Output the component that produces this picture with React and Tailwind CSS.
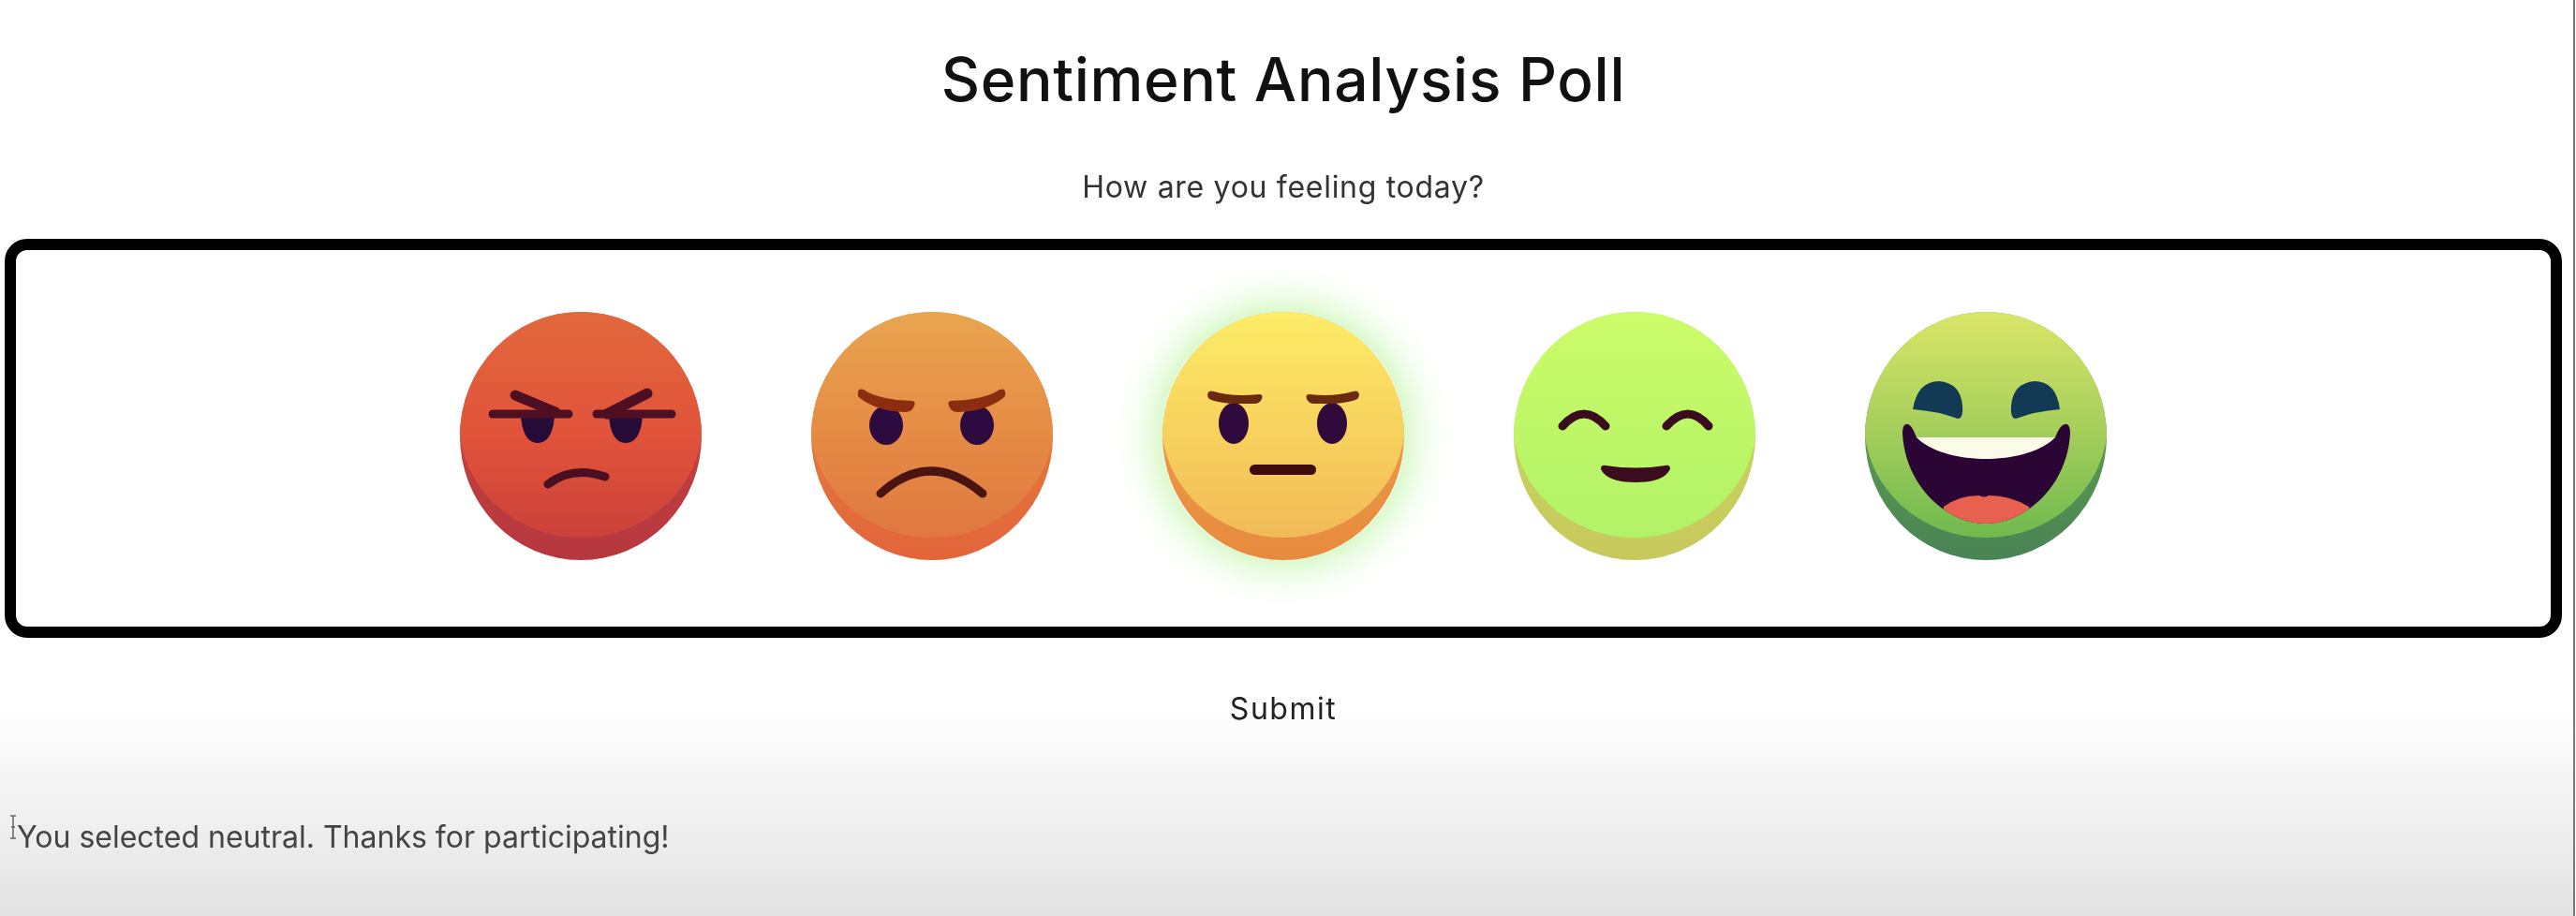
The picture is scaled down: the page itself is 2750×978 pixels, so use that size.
import React from 'react';

function FaceBase({ id, stops, rim, children }) {
  return (
    <svg viewBox="0 0 258 265" className="w-full h-full block">
      <defs>
        <linearGradient id={`${id}-rim`} x1="0" y1="0" x2="0" y2="1">
          <stop offset="0" stopColor={rim[0]} />
          <stop offset="1" stopColor={rim[1]} />
        </linearGradient>
        <linearGradient id={`${id}-face`} x1="0" y1="0" x2="0" y2="1">
          {stops.map(([o, c]) => (
            <stop key={o} offset={o} stopColor={c} />
          ))}
        </linearGradient>
        <clipPath id={`${id}-clip`}>
          <ellipse cx="129" cy="132.5" rx="129" ry="132.5" />
        </clipPath>
      </defs>
      <ellipse cx="129" cy="132.5" rx="129" ry="132.5" fill={`url(#${id}-rim)`} />
      <g clipPath={`url(#${id}-clip)`}>
        <ellipse cx="129" cy="118" rx="130" ry="123" fill={`url(#${id}-face)`} />
      </g>
      {children}
    </svg>
  );
}

function FuriousFace() {
  return (
    <FaceBase
      id="furious"
      rim={['#d2493c', '#b5373f']}
      stops={[[0, '#e2693c'], [0.55, '#e1533a'], [1, '#cb413a']]}
    >
      <g fill="#260a38">
        <path d="M65 106H101C101 126 95 140 83 140C71 140 65 126 65 106Z" />
        <path d="M159 106H195C195 126 189 140 177 140C165 140 159 126 159 106Z" />
      </g>
      <g fill="none" stroke="#4f0f22" strokeLinecap="round">
        <path d="M35 109H116" strokeWidth="9" />
        <path d="M146 109H226" strokeWidth="9" />
        <path d="M59 89L102 107" strokeWidth="11" />
        <path d="M200 87L157 109" strokeWidth="11" />
        <path d="M94 184Q120 164 155 176" strokeWidth="9" stroke="#4a0f20" />
      </g>
    </FaceBase>
  );
}

function AngryFace() {
  return (
    <FaceBase
      id="angry"
      rim={['#e58a45', '#e2653a']}
      stops={[[0, '#e9a650'], [0.55, '#e58b45'], [1, '#df7840']]}
    >
      <ellipse cx="80" cy="121" rx="18" ry="21" fill="#2d0a40" />
      <ellipse cx="177" cy="121" rx="18" ry="21" fill="#2d0a40" />
      <g fill="#8c2d10">
        <path d="M50 86Q50 81 56 83Q72 94 108 95Q112 96 110 100Q108 107 100 107Q70 106 52 92Q49 90 50 86Z" />
        <path d="M207 86Q207 81 201 83Q185 94 149 95Q145 96 147 100Q149 107 157 107Q187 106 205 92Q208 90 207 86Z" />
      </g>
      <path d="M74 194Q127 146 183 194" fill="none" stroke="#4a1410" strokeWidth="9" strokeLinecap="round" />
    </FaceBase>
  );
}

function NeutralFace() {
  return (
    <FaceBase
      id="neutral"
      rim={['#f0a64c', '#e78a3f']}
      stops={[[0, '#fdee67'], [0.5, '#f8d35e'], [1, '#f1bb58']]}
    >
      <ellipse cx="76" cy="119" rx="16" ry="22" fill="#300a3c" />
      <ellipse cx="181" cy="119" rx="16" ry="22" fill="#300a3c" />
      <g fill="#6a2a10">
        <path d="M48 88Q49 83 55 85Q75 91 103 88Q108 88 106 93Q104 98 98 98H74Q55 96 50 93Q48 91 48 88Z" />
        <path d="M210 88Q209 83 203 85Q183 91 157 88Q152 88 154 93Q156 98 162 98H184Q203 96 208 93Q210 91 210 88Z" />
      </g>
      <rect x="93" y="163" width="71" height="11" rx="5.5" fill="#3d0b0a" />
    </FaceBase>
  );
}

function HappyFace() {
  return (
    <FaceBase
      id="happy"
      rim={['#c2e064', '#c8c85c']}
      stops={[[0, '#cefc6a'], [0.5, '#bef767'], [1, '#b2f268']]}
    >
      <g fill="none" stroke="#3a0c1e" strokeWidth="9" strokeLinecap="round">
        <path d="M52 122Q75 96 98 122" />
        <path d="M163 122Q186 96 208 122" />
      </g>
      <path d="M93 168Q93 163 98 164Q130 169 162 164Q167 163 167 168Q160 182 130 182Q100 182 93 168Z" fill="#3a0c1e" />
    </FaceBase>
  );
}

const LAUGH_MOUTH = 'M40 130Q40 118 46 120Q50 121 55 134H203Q208 121 213 120Q219 118 219 130C216 185 172 226 129 226C86 226 43 185 40 130Z';

function LaughingFace() {
  return (
    <FaceBase
      id="laughing"
      rim={['#66b04c', '#4a8355']}
      stops={[[0, '#dce668'], [0.5, '#a9d05c'], [1, '#6fb94f']]}
    >
      <defs>
        <clipPath id="laughing-mouth">
          <path d={LAUGH_MOUTH} />
        </clipPath>
      </defs>
      <g fill="#123a55">
        <path d="M51 104Q56 74 79 74Q102 76 104 100Q105 114 99 114Q78 106 51 104Z" />
        <path d="M208 104Q204 74 181 74Q158 76 156 100Q155 114 161 114Q182 106 208 104Z" />
      </g>
      <path d={LAUGH_MOUTH} fill="#2b0634" />
      <g clipPath="url(#laughing-mouth)">
        <path d="M55 134H203C190 148 160 157 129 157C98 157 68 148 55 134Z" fill="#fcfbea" />
        <path d="M80 228L84 208Q100 196 122 196Q127 199 132 196Q155 196 175 208L180 228Z" fill="#e8604f" />
      </g>
    </FaceBase>
  );
}

const faces = [
  { key: 'very-negative', Icon: FuriousFace },
  { key: 'negative', Icon: AngryFace },
  { key: 'neutral', Icon: NeutralFace, selected: true },
  { key: 'positive', Icon: HappyFace },
  { key: 'very-positive', Icon: LaughingFace },
];

export default function App() {
  return (
    <div className="relative h-[978px] mr-px overflow-hidden border-r-2 border-[#777] bg-linear-to-b from-white from-[77%] to-[#e3e3e3] pl-[5px] pr-[12px] flex flex-col blur-[0.6px] font-['Inter','Liberation_Sans',sans-serif]">
      <h1 className="mt-[46px] text-center text-[64px] leading-[78px] font-medium tracking-[0.7px] text-[#111]">
        Sentiment Analysis Poll
      </h1>
      <p className="mt-[56px] text-center text-[32px] leading-[40px] tracking-[0.7px] text-[#333]">
        How are you feeling today?
      </p>
      <div className="mt-[35px] h-[426px] border-[12px] border-black rounded-[24px] bg-white pb-[5px] flex items-center justify-center gap-[117px]">
        {faces.map(({ key, Icon, selected }) => (
          <button
            key={key}
            className={`w-[258px] h-[265px] rounded-full ${selected ? 'shadow-[0_0_42px_10px_#c9f7b4]' : ''}`}
          >
            <Icon />
          </button>
        ))}
      </div>
      <button className="mt-[56px] self-center text-[32px] leading-[40px] tracking-[1.5px] text-[#222]">Submit</button>
      <p className="mt-[97px] pl-[13px] text-[32px] leading-[40px] text-[#444]">
        You selected neutral. Thanks for participating!
      </p>
      {/* text cursor */}
      <svg viewBox="0 0 8 26" className="absolute left-[10px] top-[870px] w-[8px] h-[26px]" fill="none" stroke="#666" strokeWidth="1.5">
        <path d="M1 1H7M4 1V25M1 25H7M2 13H6" />
      </svg>
    </div>
  );
}
